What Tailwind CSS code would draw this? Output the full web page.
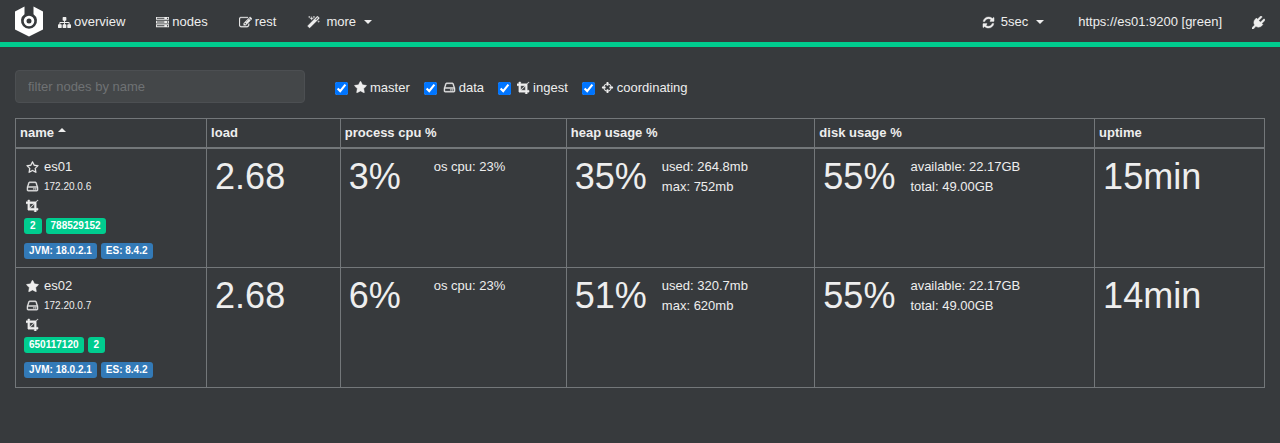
<!DOCTYPE html>
<html lang="en">
<head>
<meta charset="utf-8">
<title>nodes</title>
<script src="https://cdn.jsdelivr.net/npm/@tailwindcss/browser@4"></script>
</head>
<body class="min-h-screen bg-[#373a3d] font-['Liberation_Sans',Arial,sans-serif] text-[13px] leading-5 text-[#eeeeee]">
<svg class="hidden" aria-hidden="true">
  <symbol id="sitemap" viewBox="0 0 1792 1792"><path d="M1792 1248v320q0 40-28 68t-68 28h-320q-40 0-68-28t-28-68v-320q0-40 28-68t68-28h96v-192h-512v192h96q40 0 68 28t28 68v320q0 40-28 68t-68 28h-320q-40 0-68-28t-28-68v-320q0-40 28-68t68-28h96v-192h-512v192h96q40 0 68 28t28 68v320q0 40-28 68t-68 28h-320q-40 0-68-28t-28-68v-320q0-40 28-68t68-28h96v-192q0-52 38-90t90-38h512v-192h-96q-40 0-68-28t-28-68v-320q0-40 28-68t68-28h320q40 0 68 28t28 68v320q0 40-28 68t-68 28h-96v192h512q52 0 90 38t38 90v192h96q40 0 68 28t28 68z"/></symbol>
  <symbol id="server" viewBox="0 0 1792 1792"><path d="M128 1408h1024v-128h-1024v128zm0-512h1024v-128h-1024v128zm1568 448q0-40-28-68t-68-28-68 28-28 68 28 68 68 28 68-28 28-68zm-1568-960h1024v-128h-1024v128zm1568 448q0-40-28-68t-68-28-68 28-28 68 28 68 68 28 68-28 28-68zm0-512q0-40-28-68t-68-28-68 28-28 68 28 68 68 28 68-28 28-68zm96 832v384h-1792v-384h1792zm0-512v384h-1792v-384h1792zm0-512v384h-1792v-384h1792z"/></symbol>
  <symbol id="edit" viewBox="0 0 1792 1792"><path stroke="currentColor" stroke-width="40" d="M888 1184l116-116-152-152-116 116v56h96v96h56zm440-720q-16-16-33 1l-350 350q-17 17-1 33t33-1l350-350q17-17 1-33zm80 594v190q0 119-84.5 203.5t-203.5 84.5h-832q-119 0-203.5-84.5t-84.5-203.5v-832q0-119 84.5-203.5t203.5-84.5h832q63 0 117 25 15 7 18 23 3 17-9 29l-49 49q-14 14-32 8-23-6-45-6h-832q-66 0-113 47t-47 113v832q0 66 47 113t113 47h832q66 0 113-47t47-113v-126q0-13 9-22l64-64q15-15 35-7t20 29zm-96-738l288 288-672 672h-288v-288zm444 132l-92 92-288-288 92-92q28-28 68-28t68 28l152 152q28 28 28 68t-28 68z"/></symbol>
  <symbol id="magic" viewBox="0 0 1792 1792"><path stroke="currentColor" stroke-width="40" d="M1254 581l293-293-107-107-293 293zm447-293q0 27-18 45l-1286 1286q-18 18-45 18t-45-18l-198-198q-18-18-18-45t18-45l1286-1286q18-18 45-18t45 18l198 198q18 18 18 45zm-1351-190l98 30-98 30-30 98-30-98-98-30 98-30 30-98zm350 162l196 60-196 60-60 196-60-196-196-60 196-60 60-196zm930 478l98 30-98 30-30 98-30-98-98-30 98-30 30-98zm-640-640l98 30-98 30-30 98-30-98-98-30 98-30 30-98z"/></symbol>
  <symbol id="refresh" viewBox="0 0 1792 1792"><path stroke="currentColor" stroke-width="50" d="M1639 1056q0 5-1 7-64 268-268 434.5t-478 166.5q-146 0-282.5-55t-243.5-157l-129 129q-19 19-45 19t-45-19-19-45v-448q0-26 19-45t45-19h448q26 0 45 19t19 45-19 45l-137 137q71 66 161 102t187 36q134 0 250-65t186-179q11-17 53-117 8-23 30-23h192q13 0 22.5 9.5t9.5 22.5zm25-800v448q0 26-19 45t-45 19h-448q-26 0-45-19t-19-45 19-45l138-138q-148-137-349-137-134 0-250 65t-186 179q-11 17-53 117-8 23-30 23h-199q-13 0-22.5-9.5t-9.5-22.5v-7q65-268 270-434.5t480-166.5q146 0 284 55.5t245 156.5l130-129q19-19 45-19t45 19 19 45z"/></symbol>
  <symbol id="plug" viewBox="0 0 1792 1792"><path stroke="currentColor" stroke-width="70" d="M1755 453q37 38 37 90.5t-37 90.5l-401 400 150 150-160 160q-163 163-389.5 186.5t-411.5-100.5l-362 362h-181v-181l362-362q-124-185-100.5-411.5t186.5-389.5l160-160 150 150 400-401q38-37 91-37t90 37 37 90.5-37 90.5l-400 401 234 234 401-400q38-37 91-37t90 37z"/></symbol>
  <symbol id="star" viewBox="0 0 1792 1792"><path stroke="currentColor" stroke-width="60" d="M1728 647q0 22-26 48l-363 354 86 500q1 7 1 20 0 21-10.5 35.5t-30.5 14.5q-19 0-40-12l-449-236-449 236q-22 12-40 12-21 0-31.5-14.5t-10.5-35.5q0-6 2-20l86-500-364-354q-25-27-25-48 0-37 56-46l502-73 225-455q19-41 49-41t49 41l225 455 502 73q56 9 56 46z"/></symbol>
  <symbol id="star-o" viewBox="0 0 1792 1792"><path stroke="currentColor" stroke-width="40" d="M1201 1004l306-297-422-62-189-382-189 382-422 62 306 297-73 421 378-199 377 199zm527-357q0 22-26 48l-363 354 86 500q1 7 1 20 0 50-41 50-19 0-40-12l-449-236-449 236q-22 12-40 12-21 0-31.5-14.5t-10.5-35.5q0-6 2-20l86-500-364-354q-25-27-25-48 0-37 56-46l502-73 225-455q19-41 49-41t49 41l225 455 502 73q56 9 56 46z"/></symbol>
  <symbol id="hdd" viewBox="0 0 1792 1792"><path stroke="currentColor" stroke-width="50" d="M1168 1216q0 33-23.5 56.5t-56.5 23.5-56.5-23.5-23.5-56.5 23.5-56.5 56.5-23.5 56.5 23.5 23.5 56.5zm256 0q0 33-23.5 56.5t-56.5 23.5-56.5-23.5-23.5-56.5 23.5-56.5 56.5-23.5 56.5 23.5 23.5 56.5zm112 160v-320q0-13-9.500-22.500t-22.500-9.500h-1216q-13 0-22.500 9.500t-9.500 22.500v320q0 13 9.500 22.500t22.500 9.500h1216q13 0 22.500-9.500t9.500-22.500zm-1230-480h1180l-157-482q-4-13-16-21.500t-26-8.500h-782q-14 0-26 8.500t-16 21.500zm1358 160v320q0 66-47 113t-113 47h-1216q-66 0-113-47t-47-113v-320q0-25 16-75l197-606q17-53 63-86t101-33h782q55 0 101 33t63 86l197 606q16 50 16 75z"/></symbol>
  <symbol id="crop" viewBox="0 0 1792 1792"><path stroke="currentColor" stroke-width="60" d="M557 1280h595v-595zm-45-45l595-595h-595v595zm1152 77v192q0 14-9 23t-23 9h-224v224q0 14-9 23t-23 9h-192q-14 0-23-9t-9-23v-224h-864q-14 0-23-9t-9-23v-864h-224q-14 0-23-9t-9-23v-192q0-14 9-23t23-9h224v-224q0-14 9-23t23-9h192q14 0 23 9t9 23v224h851l246-247q10-9 23-9t23 9q9 10 9 23t-9 23l-247 246v851h224q14 0 23 9t9 23z"/></symbol>
  <symbol id="crosshairs" viewBox="0 0 1792 1792"><path d="M1325 1024h-109q-26 0-45-19t-19-45v-128q0-26 19-45t45-19h109q-32-108-112.5-188.5t-188.5-112.5v109q0 26-19 45t-45 19h-128q-26 0-45-19t-19-45v-109q-108 32-188.5 112.5t-112.5 188.5h109q26 0 45 19t19 45v128q0 26-19 45t-45 19h-109q32 108 112.5 188.5t188.5 112.5v-109q0-26 19-45t45-19h128q26 0 45 19t19 45v109q108-32 188.5-112.5t112.5-188.5zm339-192v128q0 26-19 45t-45 19h-143q-37 161-154.5 278.5t-278.5 154.5v143q0 26-19 45t-45 19h-128q-26 0-45-19t-19-45v-143q-161-37-278.5-154.5t-154.5-278.5h-143q-26 0-45-19t-19-45v-128q0-26 19-45t45-19h143q37-161 154.5-278.5t278.5-154.5v-143q0-26 19-45t45-19h128q26 0 45 19t19 45v143q161 37 278.5 154.5t154.5 278.5h143q26 0 45 19t19 45z"/></symbol>
</svg>

<header class="border-b-5 border-[#00cc8f]">
  <nav class="flex h-[42px] items-center px-[15px]">
    <a href="#" aria-label="home" class="mr-[15px]">
      <svg class="h-[31px] w-7" viewBox="0 0 28 31"><path fill="#fff" d="M9.500 .5L0 5.500v18l14 7 14-7v-18L18.500 .5V8.200a8 8 0 1 1-9 0z"/><circle cx="14" cy="15" r="3.900" fill="none" stroke="#fff" stroke-width="2.800"/></svg>
    </a>
    <div class="flex gap-[31px] pt-[2px]">
      <a href="#" class="flex items-center gap-[3px]"><svg class="size-[13px] fill-current"><use href="#sitemap"/></svg>overview</a>
      <a href="#" class="flex items-center gap-[3px]"><svg class="size-[13px] fill-current"><use href="#server"/></svg>nodes</a>
      <a href="#" class="flex items-center gap-[3px]"><svg class="size-[13px] fill-current"><use href="#edit"/></svg>rest</a>
      <button class="flex items-center"><svg class="mr-[6px] size-[13px] fill-current"><use href="#magic"/></svg>more<svg class="ml-2 h-1 w-2 fill-current" viewBox="0 0 8 4"><path d="M0 0h8L4 4z"/></svg></button>
    </div>
    <div class="ml-auto flex items-center pt-[2px]">
      <button class="mr-[34px] flex items-center"><svg class="mr-[6px] size-[13px] fill-current"><use href="#refresh"/></svg>5sec<svg class="ml-2 h-1 w-2 fill-current" viewBox="0 0 8 4"><path d="M0 0h8L4 4z"/></svg></button>
      <span class="mr-[30px]">https://es01:9200 [green]</span>
      <a href="#" aria-label="disconnect"><svg class="size-[13px] fill-current"><use href="#plug"/></svg></a>
    </div>
  </nav>
</header>

<main class="px-[15px] pt-[23px]">
  <form class="mb-[15px] flex items-center">
    <input type="text" aria-label="filter nodes by name" placeholder="filter nodes by name" class="mr-[30px] h-[33px] w-[290px] rounded border border-[#4c4f52] bg-[#444749] px-3 placeholder:text-[#6f7274]">
    <div class="flex gap-[14px] pt-[2px]">
      <label class="flex items-center"><input type="checkbox" checked class="mt-px mr-[6px] size-[13px]"><svg class="mr-[3px] size-[13px] fill-current"><use href="#star"/></svg>master</label>
      <label class="flex items-center"><input type="checkbox" checked class="mt-px mr-[6px] size-[13px]"><svg class="mr-[3px] size-[13px] fill-current"><use href="#hdd"/></svg>data</label>
      <label class="flex items-center"><input type="checkbox" checked class="mt-px mr-[6px] size-[13px]"><svg class="mr-[3px] size-[13px] fill-current"><use href="#crop"/></svg>ingest</label>
      <label class="flex items-center"><input type="checkbox" checked class="mt-px mr-[6px] size-[13px]"><svg class="mr-[3px] size-[13px] fill-current"><use href="#crosshairs"/></svg>coordinating</label>
    </div>
  </form>

  <table class="w-full table-fixed border-collapse border border-[#73777a] text-left [&_td]:border [&_td]:border-[#73777a] [&_td]:p-2 [&_td]:align-top [&_th]:border [&_th]:border-b-2 [&_th]:border-[#73777a] [&_th]:px-1 [&_th]:py-1">
    <colgroup>
      <col class="w-[15.3%]"><col class="w-[10.7%]"><col class="w-[18.1%]"><col class="w-[19.9%]"><col class="w-[22.4%]"><col>
    </colgroup>
    <thead>
      <tr>
        <th><button class="flex items-center gap-1 font-bold">name<svg class="mb-[7px] h-1 w-2 fill-current" viewBox="0 0 8 4"><path d="M0 4h8L4 0z"/></svg></button></th>
        <th>load</th><th>process cpu %</th><th>heap usage %</th><th>disk usage %</th><th>uptime</th>
      </tr>
    </thead>
    <tbody>
      <tr>
        <td>
          <div class="flex items-center gap-[5px] pl-[2px]"><svg class="size-[13px] fill-current"><use href="#star-o"/></svg>es01</div>
          <div class="flex items-center gap-[5px] pl-[2px] text-[10px] leading-5"><svg class="mb-[2px] size-[13px] fill-current"><use href="#hdd"/></svg>172.20.0.6</div>
          <div class="flex h-5 items-start pt-[2px] pl-[2px]"><svg class="size-[13px] fill-current"><use href="#crop"/></svg></div>
          <div class="flex flex-col gap-[9px] pt-px text-[10px] leading-4 font-bold text-white">
            <div class="flex gap-1"><span class="rounded-[3px] bg-[#00cc8f] px-[6px]">2</span><span class="rounded-[3px] bg-[#00cc8f] px-[5px]">788529152</span></div>
            <div class="flex gap-1"><span class="rounded-[3px] bg-[#337ab7] px-[5px]">JVM: 18.0.2.1</span><span class="rounded-[3px] bg-[#337ab7] px-[5px]">ES: 8.4.2</span></div>
          </div>
        </td>
        <td><div class="text-[36px] leading-10">2.68</div></td>
        <td><div class="flex gap-[15px]"><div class="min-w-[70px] text-[36px] leading-10">3%</div><div>os cpu: 23%</div></div></td>
        <td><div class="flex gap-[15px]"><div class="text-[36px] leading-10">35%</div><div>used: 264.8mb<br>max: 752mb</div></div></td>
        <td><div class="flex gap-[15px]"><div class="text-[36px] leading-10">55%</div><div>available: 22.17GB<br>total: 49.00GB</div></div></td>
        <td><div class="text-[36px] leading-10">15min</div></td>
      </tr>
      <tr>
        <td>
          <div class="flex items-center gap-[5px] pl-[2px]"><svg class="size-[13px] fill-current"><use href="#star"/></svg>es02</div>
          <div class="flex items-center gap-[5px] pl-[2px] text-[10px] leading-5"><svg class="mb-[2px] size-[13px] fill-current"><use href="#hdd"/></svg>172.20.0.7</div>
          <div class="flex h-5 items-start pt-[2px] pl-[2px]"><svg class="size-[13px] fill-current"><use href="#crop"/></svg></div>
          <div class="flex flex-col gap-[9px] pt-px pb-px text-[10px] leading-4 font-bold text-white">
            <div class="flex gap-1"><span class="rounded-[3px] bg-[#00cc8f] px-[5px]">650117120</span><span class="rounded-[3px] bg-[#00cc8f] px-[6px]">2</span></div>
            <div class="flex gap-1"><span class="rounded-[3px] bg-[#337ab7] px-[5px]">JVM: 18.0.2.1</span><span class="rounded-[3px] bg-[#337ab7] px-[5px]">ES: 8.4.2</span></div>
          </div>
        </td>
        <td><div class="text-[36px] leading-10">2.68</div></td>
        <td><div class="flex gap-[15px]"><div class="min-w-[70px] text-[36px] leading-10">6%</div><div>os cpu: 23%</div></div></td>
        <td><div class="flex gap-[15px]"><div class="text-[36px] leading-10">51%</div><div>used: 320.7mb<br>max: 620mb</div></div></td>
        <td><div class="flex gap-[15px]"><div class="text-[36px] leading-10">55%</div><div>available: 22.17GB<br>total: 49.00GB</div></div></td>
        <td><div class="text-[36px] leading-10">14min</div></td>
      </tr>
    </tbody>
  </table>
</main>
</body>
</html>
